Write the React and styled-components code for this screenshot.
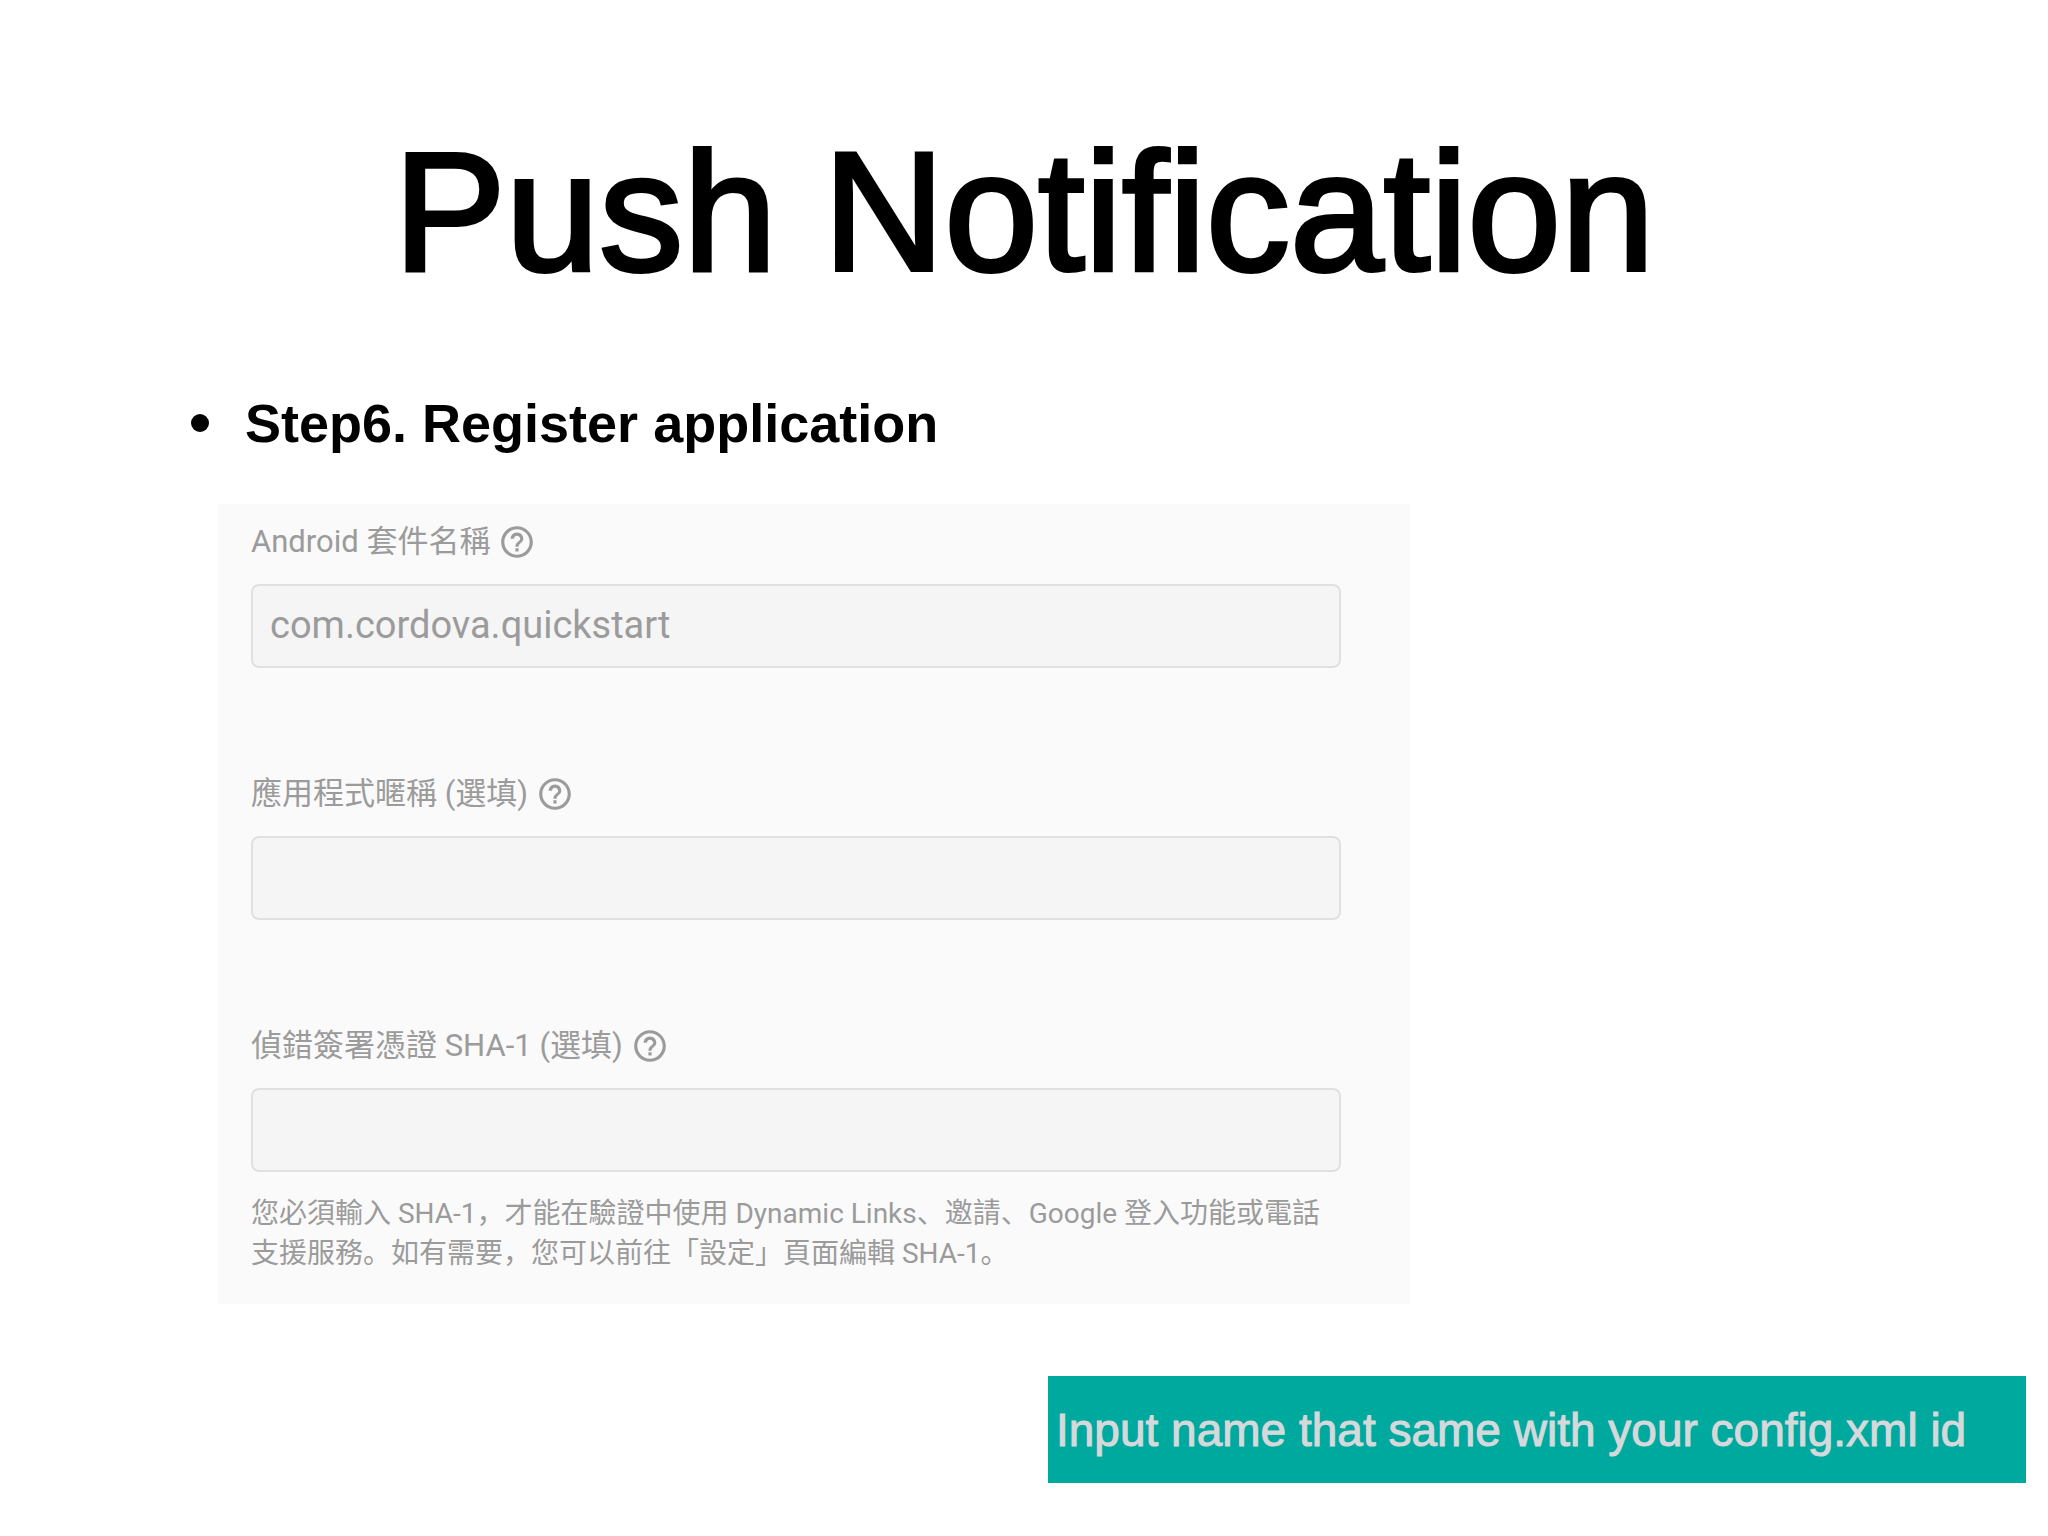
import React, { useState } from 'react';
import styled, { createGlobalStyle } from 'styled-components';
import { MdHelpOutline } from 'react-icons/md';

export default function App() {

    // STATES AND VARIABLES
    const [app, setApp] = useState({ packageName: "com.cordova.quickstart", nickname: "", sha1: "" });

    const fields = [
        { name: "packageName", label: "Android 套件名稱" },
        { name: "nickname", label: "應用程式暱稱 (選填)" },
        { name: "sha1", label: "偵錯簽署憑證 SHA-1 (選填)" }
    ];


    // INPUT HANDLER
    const handleChange = (e) => {
        setApp({ ...app, [e.target.name]: e.target.value });
    };

    return (
        <Slide>
            <GlobalStyle />
            <Title>Push Notification</Title>

            <Steps>
                <Step>Step6. Register application</Step>
            </Steps>

            <Panel onSubmit={(e) => e.preventDefault()}>
                {fields.map((field) => (
                <Field key={field.name}>
                    <Label htmlFor={field.name}>
                        {field.label}
                        <HelpIcon />
                    </Label>
                    <Input
                        id={field.name}
                        name={field.name}
                        type="text"
                        value={app[field.name]}
                        onChange={handleChange}
                    />
                </Field>))}

                <Hint>
                    您必須輸入 SHA-1，才能在驗證中使用 Dynamic Links、邀請、Google 登入功能或電話支援服務。如有需要，您可以前往「設定」頁面編輯 SHA-1。
                </Hint>
            </Panel>

            <Note>Input name that same with your config.xml id</Note>
        </Slide>
    )
}

// STYLED COMPONENTS
const GlobalStyle = createGlobalStyle`
* {
    box-sizing: border-box;
}

body {
    margin: 0;
    background: #fff;
    color: #000;
    font-family: "Liberation Sans", Arial, sans-serif;
}
`

const Slide = styled.main`
    display: flex;
    flex-direction: column;
    min-height: 100vh;
    padding: 116px 22px 53px;
`

const Title = styled.h1`
    margin: 0;
    font-size: 168px;
    font-weight: 400;
    line-height: 192px;
    text-align: center;
    -webkit-text-stroke: 4px #000;
`

const Steps = styled.ul`
    margin: 83px 0 0;
    padding: 0 0 0 169px;
    list-style: none;
`

const Step = styled.li`
    display: flex;
    align-items: center;
    gap: 36px;
    font-size: 54px;
    font-weight: 700;
    line-height: 64px;

    &::before {
        content: "";
        width: 18px;
        height: 18px;
        border-radius: 50%;
        background: #000;
    }
`

const Panel = styled.form`
    width: 100%;
    max-width: 1192px;
    margin: 49px 0 0 196px;
    padding: 19px 69px 30px 33px;
    background: #fafafa;
    color: #9b9b9b;
    font-family: Roboto, "Noto Sans CJK SC", sans-serif;
`

const Field = styled.div`
    & + & {
        margin-top: 107px;
    }
`

const Label = styled.label`
    display: flex;
    align-items: flex-start;
    gap: 8px;
    height: 38px;
    margin-bottom: 23px;
    font-size: 31px;
    line-height: 38px;
`

const HelpIcon = styled(MdHelpOutline)`
    width: 38px;
    height: 38px;
`

const Input = styled.input`
    display: block;
    width: 100%;
    height: 84px;
    padding: 0 17px 2px;
    border: 2px solid #e0e0e0;
    border-radius: 8px;
    background: #f5f5f5;
    color: #9b9b9b;
    font-family: inherit;
    font-size: 38px;
`

const Hint = styled.p`
    margin: 22px 0 0;
    font-size: 28px;
    line-height: 40px;
`

const Note = styled.aside`
    align-self: flex-end;
    width: 100%;
    max-width: 978px;
    margin-top: auto;
    padding: 26px 10px 25px 8px;
    background: #00a99d;
    color: #d6d9dc;
    font-size: 46px;
    line-height: 56px;
    -webkit-text-stroke: 1px #d6d9dc;
`
